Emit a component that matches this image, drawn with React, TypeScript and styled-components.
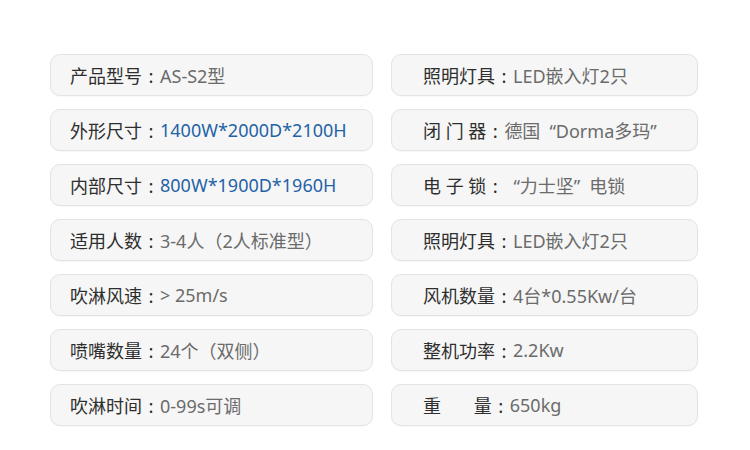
import React from "react";
import styled, { createGlobalStyle } from "styled-components";

const Global = createGlobalStyle`
  html, body { margin: 0; padding: 0; background: #ffffff; }
  body { font-family: "Noto Sans", "Noto Sans CJK SC", sans-serif; }
`;

const Page = styled.div`
  width: 750px;
  height: 450px;
  box-sizing: border-box;
  padding: 54px 0 0 50px;
  display: grid;
  grid-template-columns: 323px 307px;
  column-gap: 18px;
  row-gap: 13px;
  grid-auto-rows: 42px;
`;

const Card = styled.div<{ $pad: number }>`
  box-sizing: border-box;
  background: #f6f6f6;
  border: 1px solid #e3e3e3;
  border-radius: 10px;
  box-shadow: 0 1px 1px rgba(0, 0, 0, 0.03);
  display: flex;
  align-items: center;
  padding-left: ${(p) => p.$pad}px;
  font-size: 18px;
  white-space: pre;
  font-family: "Noto Sans", "Noto Sans CJK SC", sans-serif;
`;

const Label = styled.span`
  color: #2e2e2e;
  font-family: "Noto Sans", "Noto Sans CJK SC", sans-serif;
`;

const Colon = styled.span`
  display: inline-block;
  width: 18px;
  text-align: center;
  color: #2e2e2e;
  font-family: "Noto Sans CJK SC", sans-serif;
`;

const Value = styled.span<{ $blue?: boolean }>`
  color: ${(p) => (p.$blue ? "#1f63a6" : "#6b6b6b")};
`;

const Quote = styled.span<{ $open?: boolean }>`
  margin-left: ${(p) => (p.$open ? "9px" : "0")};
  margin-right: ${(p) => (p.$open ? "0" : "9px")};
`;

type Item = { label: string; value: React.ReactNode; blue?: boolean };

const left: Item[] = [
  { label: "产品型号", value: "AS-S2型" },
  { label: "外形尺寸", value: "1400W*2000D*2100H", blue: true },
  { label: "内部尺寸", value: "800W*1900D*1960H", blue: true },
  { label: "适用人数", value: "3-4人（2人标准型）" },
  { label: "吹淋风速", value: "> 25m/s" },
  { label: "喷嘴数量", value: "24个（双侧）" },
  { label: "吹淋时间", value: "0-99s可调" },
];

const right: Item[] = [
  { label: "照明灯具", value: "LED嵌入灯2只" },
  {
    label: "闭 门 器",
    value: (
      <>
        德国<Quote $open>“</Quote>Dorma多玛<Quote>”</Quote>
      </>
    ),
  },
  {
    label: "电 子 锁",
    value: (
      <>
        <Quote $open>“</Quote>力士坚<Quote>”</Quote>电锁
      </>
    ),
  },
  { label: "照明灯具", value: "LED嵌入灯2只" },
  { label: "风机数量", value: "4台*0.55Kw/台" },
  { label: "整机功率", value: "2.2Kw" },
  { label: "重       量", value: "650kg" },
];

export default function App() {
  return (
    <>
      <Global />
      <Page>
        {left.map((l, i) => {
          const r = right[i];
          return (
            <React.Fragment key={i}>
              <Card $pad={19}>
                <Label>{l.label}</Label>
                <Colon>:</Colon>
                <Value $blue={l.blue}>{l.value}</Value>
              </Card>
              <Card $pad={31}>
                <Label>{r.label}</Label>
                <Colon>:</Colon>
                <Value $blue={r.blue}>{r.value}</Value>
              </Card>
            </React.Fragment>
          );
        })}
      </Page>
    </>
  );
}
